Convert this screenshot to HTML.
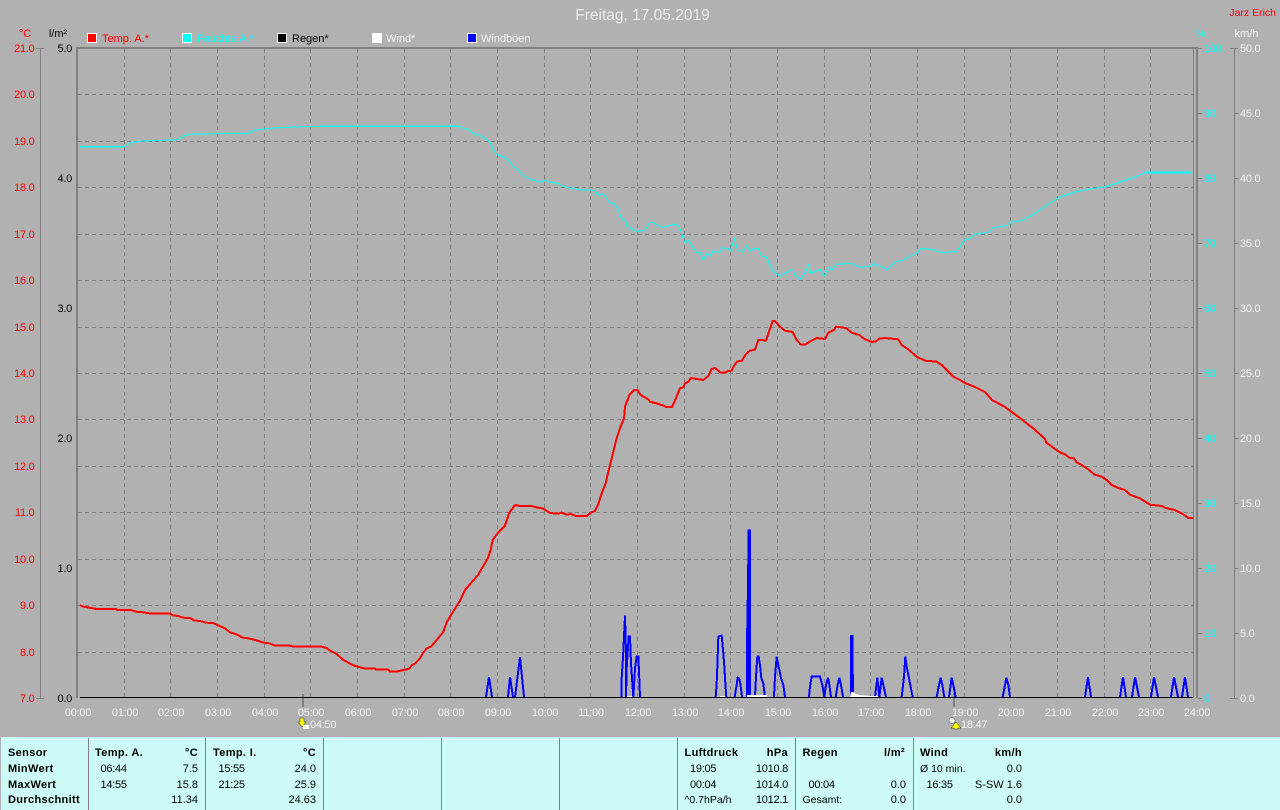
<!DOCTYPE html>
<html lang="de">
<head>
<meta charset="utf-8">
<title>Freitag, 17.05.2019</title>
<style>
html,body{margin:0;padding:0;background:#b1b1b1;width:1280px;height:810px;overflow:hidden}
svg{display:block;position:absolute;left:0;top:0}
text{font-family:"Liberation Sans",sans-serif;font-size:11px}
.w{fill:#f4f4f4}.r{fill:#ff0000}.c{fill:#00ffff}.k{fill:#000}
.e{text-anchor:end}.m{text-anchor:middle}
.t{letter-spacing:-.25px}
.b{font-weight:bold;letter-spacing:.35px;fill:#000}
.grid line{stroke:#808080;stroke-width:1;stroke-dasharray:4 3;shape-rendering:crispEdges}
.ax rect{fill:#808080}
.tr polyline{fill:none;vector-effect:non-scaling-stroke;stroke-linejoin:round}
.temp polyline{stroke:#ff0000;stroke-width:2;shape-rendering:crispEdges}
.hum polyline{stroke:#00ffff;stroke-width:1;shape-rendering:crispEdges}
.hum polyline.f{stroke-width:1.6}
.wind polyline{stroke:#0000ff;stroke-width:2;shape-rendering:crispEdges;stroke-linejoin:miter}
</style>
</head>
<body>
<svg width="1280" height="810" viewBox="0 0 1280 810" xmlns="http://www.w3.org/2000/svg">
<rect width="1280" height="810" fill="#b1b1b1"/>

<!-- grid -->
<g class="grid">
<line x1="124.5" y1="49" x2="124.5" y2="697"/><line x1="170.5" y1="49" x2="170.5" y2="697"/><line x1="217.5" y1="49" x2="217.5" y2="697"/><line x1="264.5" y1="49" x2="264.5" y2="697"/><line x1="310.5" y1="49" x2="310.5" y2="697"/><line x1="357.5" y1="49" x2="357.5" y2="697"/><line x1="404.5" y1="49" x2="404.5" y2="697"/><line x1="450.5" y1="49" x2="450.5" y2="697"/><line x1="497.5" y1="49" x2="497.5" y2="697"/><line x1="544.5" y1="49" x2="544.5" y2="697"/><line x1="590.5" y1="49" x2="590.5" y2="697"/><line x1="637.5" y1="49" x2="637.5" y2="697"/><line x1="684.5" y1="49" x2="684.5" y2="697"/><line x1="730.5" y1="49" x2="730.5" y2="697"/><line x1="777.5" y1="49" x2="777.5" y2="697"/><line x1="824.5" y1="49" x2="824.5" y2="697"/><line x1="870.5" y1="49" x2="870.5" y2="697"/><line x1="917.5" y1="49" x2="917.5" y2="697"/><line x1="964.5" y1="49" x2="964.5" y2="697"/><line x1="1010.5" y1="49" x2="1010.5" y2="697"/><line x1="1057.5" y1="49" x2="1057.5" y2="697"/><line x1="1104.5" y1="49" x2="1104.5" y2="697"/><line x1="1150.5" y1="49" x2="1150.5" y2="697"/>
<line x1="78" y1="94.5" x2="1193" y2="94.5"/><line x1="78" y1="141.5" x2="1193" y2="141.5"/><line x1="78" y1="187.5" x2="1193" y2="187.5"/><line x1="78" y1="234.5" x2="1193" y2="234.5"/><line x1="78" y1="280.5" x2="1193" y2="280.5"/><line x1="78" y1="327.5" x2="1193" y2="327.5"/><line x1="78" y1="373.5" x2="1193" y2="373.5"/><line x1="78" y1="419.5" x2="1193" y2="419.5"/><line x1="78" y1="466.5" x2="1193" y2="466.5"/><line x1="78" y1="512.5" x2="1193" y2="512.5"/><line x1="78" y1="559.5" x2="1193" y2="559.5"/><line x1="78" y1="605.5" x2="1193" y2="605.5"/><line x1="78" y1="652.5" x2="1193" y2="652.5"/>
</g>

<!-- axes -->
<g class="ax" shape-rendering="crispEdges">
<rect x="76" y="47" width="1122" height="2"/>
<rect x="76" y="47" width="2" height="651"/>
<rect x="1193" y="48" width="1" height="650"/>
<rect x="1196" y="47" width="2" height="651"/>
<rect x="40" y="48" width="1" height="651"/>
<rect x="36" y="48" width="8" height="1"/><rect x="36" y="698" width="8" height="1"/>
<rect x="1234" y="48" width="1" height="651"/>
<rect x="1230" y="48" width="8" height="1"/><rect x="1230" y="698" width="8" height="1"/>
<rect x="1234" y="113" width="4" height="1"/><rect x="1234" y="178" width="4" height="1"/><rect x="1234" y="243" width="4" height="1"/><rect x="1234" y="308" width="4" height="1"/><rect x="1234" y="373" width="4" height="1"/><rect x="1234" y="438" width="4" height="1"/><rect x="1234" y="503" width="4" height="1"/><rect x="1234" y="568" width="4" height="1"/><rect x="1234" y="633" width="4" height="1"/>
<rect x="1198" y="48" width="4" height="1"/><rect x="1198" y="113" width="4" height="1"/><rect x="1198" y="178" width="4" height="1"/><rect x="1198" y="243" width="4" height="1"/><rect x="1198" y="308" width="4" height="1"/><rect x="1198" y="373" width="4" height="1"/><rect x="1198" y="438" width="4" height="1"/><rect x="1198" y="503" width="4" height="1"/><rect x="1198" y="568" width="4" height="1"/><rect x="1198" y="633" width="4" height="1"/><rect x="1198" y="698" width="4" height="1"/>
<rect x="302" y="694" width="2" height="13"/>
<rect x="953" y="693" width="2" height="14"/>
</g>

<!-- humidity -->
<g class="tr hum">
<polyline class="f" points="80,146.7 124,146.7"/>
<polyline transform="translate(0,0) scale(.33333)" points="372,440 395,427 430,423 535,419 555,406 580,402 745,400 760,391 800,386 820,384 905,380 960,379"/>
<polyline class="f" points="320,126.3 459,126.3"/>
<polyline transform="translate(440,110) scale(.33333)" points="58,49 68,55 85,58 100,70 120,76 135,85 150,97 160,120 170,134 190,140 205,150 220,170 235,180 250,197 270,207 300,216 315,211 335,217 355,221 375,231 425,240 465,241 472,255 490,252 510,278 525,283 535,298 545,327 557,330 560,347 590,365 615,360 630,338 640,338 665,352 710,342 720,355 733,397 745,390 760,413 770,428 780,428 790,450 800,430 810,438 820,423 838,428 848,413 865,416 872,422 883,385 893,420 900,422"/>
<polyline transform="translate(730,160) scale(.33333)" points="30,272 38,277 50,258 62,273 72,265 85,265 95,290 108,290 130,335 150,348 175,335 188,328 195,345 212,357 230,330 236,313 243,340 270,328 282,350 295,323 305,332 318,313 365,310 375,317 395,322 415,318 422,320 432,310 445,318 460,322 470,330 490,312 498,305 520,300 540,288 560,280 575,265 610,268 622,275 645,278 680,274 695,255 705,238 720,236 730,224 775,217 790,203 830,197 845,186 880,181 890,173 900,170"/>
<polyline points="1030,216.7 1040,210 1050,203 1060,197 1075,192 1090,189 1105,187 1120,182 1135,177 1145,172.5"/>
<polyline class="f" points="1145,172.5 1192,172.5"/>
</g>

<!-- wind -->
<g class="tr wind">
<polyline points="486,697 489,677 492,697"/>
<polyline points="508,697 510,677 513,697"/>
<polyline points="515,697 520,657 524,697"/>
<g transform="translate(600,520) scale(.33333)">
<polyline points="65,531 65,475 69,412 72,350 75,287 78,400 78,531"/>
<polyline points="78,531 80,445 86,350 90,350 93,430 97,490 100,531"/>
<polyline points="100,531 105,445 110,410 115,410 117,455 120,531"/>
<polyline points="347,531 350,490 352,440 355,350 365,347 370,400 373,440 376,490 379,531"/>
<polyline points="404,531 410,495 413,473 417,475 421,490 426,531"/>
<polyline points="441,531 441,367 444,200 446,32 450,32 450,531"/>
<polyline points="446,32 446,531"/>
<polyline points="465,531 468,470 472,410 476,410 480,435 484,475 490,490 495,531"/>
<polyline points="522,531 525,470 530,410 535,435 543,475 550,495 555,531"/>
</g>
<g transform="translate(800,620) scale(.33333)">
<polyline points="27,231 30,200 35,170 60,170 67,195 73,231 78,195 84,173 88,195 93,231"/>
<polyline points="107,231 113,195 118,173 123,195 129,231"/>
<polyline points="153,231 153,48 157,48 157,110 160,231"/>
<polyline points="225,231 232,173 238,231 245,173 250,195 258,231"/>
<polyline points="305,231 312,170 316,110 320,140 327,175 338,231"/>
<polyline points="410,231 417,195 422,173 427,195 433,231"/>
<polyline points="447,231 455,173 460,195 467,231"/>
<polyline points="608,231 615,195 619,173 625,195 630,231"/>
</g>
<polyline points="1085,697 1088,677 1091,697"/>
<polyline points="1120,697 1123,677 1126,697"/>
<polyline points="1132,697 1135,677 1139,697"/>
<polyline points="1151,697 1154,677 1158,697"/>
<polyline points="1171,697 1174,677 1178,697"/>
<polyline points="1182,697 1185,677 1188,697"/>
</g>

<!-- temperature -->
<g class="tr temp">
<polyline transform="translate(60,590) scale(.33333)" points="60,46 70,50 88,53 110,57 168,57 172,60 212,60 228,65 250,67 275,71 330,71 338,76 355,78 368,83 390,84 402,91 425,94 437,98 460,99 472,105 495,115 510,127 530,133 548,143 565,145 590,151 610,158 625,159 645,167 690,167 700,170 785,170 800,174 812,183 830,192 850,210 880,226 915,236 945,236 950,239 985,239 990,245 1010,245 1030,240 1048,236 1055,226 1065,221 1080,205 1090,187 1100,176 1115,168 1130,150 1150,126 1160,97 1175,72 1200,32"/>
<polyline points="460,600.7 465,590 478,575 488,558 490.7,550"/>
<polyline transform="translate(400,380) scale(.33333)" points="272,510 278,480 290,463 315,437 327,400 345,375 360,378 395,378 410,382 430,386 450,399 475,401 485,398 500,404 512,402 528,408 560,408 572,398 585,393 595,372 605,340 617,310 625,275 635,235 650,175 660,145 672,115 675,80 688,45 703,30 712,30 722,45 745,58 750,65 770,70 790,77 800,81 816,81 828,55"/>
<polyline transform="translate(660,300) scale(.33333)" points="47,297 60,265 70,262 75,250 85,245 93,234 110,237 130,240 145,228 155,207 165,204 182,218 195,218 205,213 215,212 222,197 232,184 245,183 258,162 270,152 285,149 295,120 305,120 318,122 327,95 338,63 345,63 360,80 375,92 398,96 410,120 422,133 435,134 455,122 470,114 495,117 505,98 522,90 528,80 558,84 575,98 598,105 610,115 635,126 648,124 658,116 675,114 715,118 725,135 745,148 770,170 795,182 830,185 845,195 880,230 900,240"/>
<polyline points="960,380 965,383 975,387 985,392 992,400 1005,407 1020,418 1030,426"/>
<polyline transform="translate(1030,420) scale(.33333)" points="0,18 10,25 45,57 48,67 75,87 92,98 105,103 118,113 132,115 140,127 155,135 175,148 192,163 215,170 230,180 245,195 265,204 285,210 300,224 330,235 360,254 395,258 410,265 435,270 460,283 475,294 490,294"/>
</g>

<!-- rain/wind white + baseline -->
<polygon points="850,697 851,692 853,692 856,694 860,695 870,696 878,696 878,697" fill="#fff"/>
<rect x="627" y="696" width="5" height="1" fill="#fff"/>
<rect x="720" y="696" width="5" height="1" fill="#fff"/>
<rect x="747" y="695" width="20" height="2" fill="#fff"/>
<rect x="80" y="697" width="1113" height="1" fill="#000"/>

<!-- sunrise / sunset icons -->
<polygon points="300,718 304,718 304,722 306,722 302,727 298,722 300,722" fill="#ffff00" stroke="#222" stroke-width=".5"/>
<rect x="303" y="725" width="6" height="4" fill="#fff"/>
<circle cx="952" cy="720.5" r="3" fill="#fff" stroke="#667" stroke-width=".6"/>
<polygon points="956,722 961,728 958,728 958,729 954,729 954,728 951,728" fill="#ffff00" stroke="#222" stroke-width=".5"/>

<!-- title -->
<text x="642.5" y="20" class="m" style="font-size:15.5px;fill:#ececec">Freitag, 17.05.2019</text>
<text x="1276" y="16" class="e r" style="font-size:10.5px">Jarz Erich</text>

<!-- units -->
<text x="25" y="37" class="r m">°C</text>
<text x="58" y="37" class="k m">l/m²</text>
<text x="1201" y="37" class="c m">%</text>
<text x="1246.5" y="37" class="w m">km/h</text>

<!-- legend -->
<g shape-rendering="crispEdges">
<rect x="87.5" y="33.5" width="9" height="9" fill="#ff0000" stroke="#fff"/>
<rect x="182.5" y="33.5" width="9" height="9" fill="#00ffff" stroke="#fff"/>
<rect x="277.5" y="33.5" width="9" height="9" fill="#000" stroke="#fff"/>
<rect x="372.5" y="33.5" width="9" height="9" fill="#fff" stroke="#fff"/>
<rect x="467.5" y="33.5" width="9" height="9" fill="#0000ff" stroke="#fff"/>
</g>
<text x="102" y="42" class="r">Temp. A.*</text>
<text x="197" y="42" class="c">Feuchte A.*</text>
<text x="292" y="42" class="k">Regen*</text>
<text x="386" y="42" class="w">Wind*</text>
<text x="481" y="42" class="w">Windböen</text>

<!-- left temp labels -->
<g class="r e t">
<text x="34.5" y="52">21.0</text><text x="34.5" y="98">20.0</text><text x="34.5" y="145">19.0</text><text x="34.5" y="191">18.0</text><text x="34.5" y="238">17.0</text><text x="34.5" y="284">16.0</text><text x="34.5" y="331">15.0</text><text x="34.5" y="377">14.0</text><text x="34.5" y="423">13.0</text><text x="34.5" y="470">12.0</text><text x="34.5" y="516">11.0</text><text x="34.5" y="563">10.0</text><text x="34.5" y="609">9.0</text><text x="34.5" y="656">8.0</text><text x="34.5" y="702">7.0</text>
</g>
<!-- rain labels -->
<g class="k e t">
<text x="72" y="52">5.0</text><text x="72" y="182">4.0</text><text x="72" y="312">3.0</text><text x="72" y="442">2.0</text><text x="72" y="572">1.0</text><text x="72" y="702">0.0</text>
</g>
<!-- humidity labels -->
<g class="c t">
<text x="1204" y="52">100</text><text x="1204" y="117">90</text><text x="1204" y="182">80</text><text x="1204" y="247">70</text><text x="1204" y="312">60</text><text x="1204" y="377">50</text><text x="1204" y="442">40</text><text x="1204" y="507">30</text><text x="1204" y="572">20</text><text x="1204" y="637">10</text><text x="1204" y="702">0</text>
</g>
<!-- wind labels -->
<g class="w t">
<text x="1240" y="52">50.0</text><text x="1240" y="117">45.0</text><text x="1240" y="182">40.0</text><text x="1240" y="247">35.0</text><text x="1240" y="312">30.0</text><text x="1240" y="377">25.0</text><text x="1240" y="442">20.0</text><text x="1240" y="507">15.0</text><text x="1240" y="572">10.0</text><text x="1240" y="637">5.0</text><text x="1240" y="702">0.0</text>
</g>
<!-- time labels -->
<g class="w m t">
<text x="78" y="716">00:00</text><text x="125" y="716">01:00</text><text x="171" y="716">02:00</text><text x="218" y="716">03:00</text><text x="265" y="716">04:00</text><text x="311" y="716">05:00</text><text x="358" y="716">06:00</text><text x="405" y="716">07:00</text><text x="451" y="716">08:00</text><text x="498" y="716">09:00</text><text x="545" y="716">10:00</text><text x="591" y="716">11:00</text><text x="638" y="716">12:00</text><text x="685" y="716">13:00</text><text x="731" y="716">14:00</text><text x="778" y="716">15:00</text><text x="825" y="716">16:00</text><text x="871" y="716">17:00</text><text x="918" y="716">18:00</text><text x="965" y="716">19:00</text><text x="1011" y="716">20:00</text><text x="1058" y="716">21:00</text><text x="1105" y="716">22:00</text><text x="1151" y="716">23:00</text><text x="1197" y="716">24:00</text>
</g>
<text x="310" y="728" class="w t">04:50</text>
<text x="961" y="728" class="w t">18:47</text>

<!-- bottom panel -->
<rect x="1" y="737" width="1279" height="73" fill="#cdfbf8"/>
<g fill="#808080" shape-rendering="crispEdges">
<rect x="88" y="738" width="1" height="72"/><rect x="205" y="738" width="1" height="72"/><rect x="323" y="738" width="1" height="72"/><rect x="441" y="738" width="1" height="72"/><rect x="559" y="738" width="1" height="72"/><rect x="677" y="738" width="1" height="72"/><rect x="795" y="738" width="1" height="72"/><rect x="913" y="738" width="1" height="72"/>
</g>
<g class="k">
<text x="8" y="756" class="b">Sensor</text>
<text x="8" y="772" class="b">MinWert</text>
<text x="8" y="788" class="b">MaxWert</text>
<text x="8" y="803" class="b">Durchschnitt</text>

<text x="95" y="756" class="b">Temp. A.</text><text x="198" y="756" class="b e">°C</text>
<text x="100.5" y="772" class="t">06:44</text><text x="198" y="772" class="e">7.5</text>
<text x="100.5" y="788" class="t">14:55</text><text x="198" y="788" class="e">15.8</text>
<text x="198" y="803" class="e">11.34</text>

<text x="213" y="756" class="b">Temp. I.</text><text x="316" y="756" class="b e">°C</text>
<text x="218.5" y="772" class="t">15:55</text><text x="316" y="772" class="e">24.0</text>
<text x="218.5" y="788" class="t">21:25</text><text x="316" y="788" class="e">25.9</text>
<text x="316" y="803" class="e">24.63</text>

<text x="684.5" y="756" class="b">Luftdruck</text><text x="788" y="756" class="b e">hPa</text>
<text x="690" y="772" class="t">19:05</text><text x="788" y="772" class="e t">1010.8</text>
<text x="690" y="788" class="t">00:04</text><text x="788" y="788" class="e t">1014.0</text>
<text x="684.5" y="803" style="font-size:10.5px">^0.7hPa/h</text><text x="788" y="803" class="e t">1012.1</text>

<text x="802.5" y="756" class="b">Regen</text><text x="905" y="756" class="b e">l/m²</text>
<text x="808.5" y="788" class="t">00:04</text><text x="906" y="788" class="e">0.0</text>
<text x="802.5" y="803" style="font-size:10.5px">Gesamt:</text><text x="906" y="803" class="e">0.0</text>

<text x="920" y="756" class="b">Wind</text><text x="1022" y="756" class="b e">km/h</text>
<text x="920" y="772" style="font-size:10.5px">Ø 10 min.</text><text x="1022" y="772" class="e">0.0</text>
<text x="926.5" y="788" class="t">16:35</text><text x="1022" y="788" class="e">S-SW 1.6</text>
<text x="1022" y="803" class="e">0.0</text>
</g>
</svg>
</body>
</html>
